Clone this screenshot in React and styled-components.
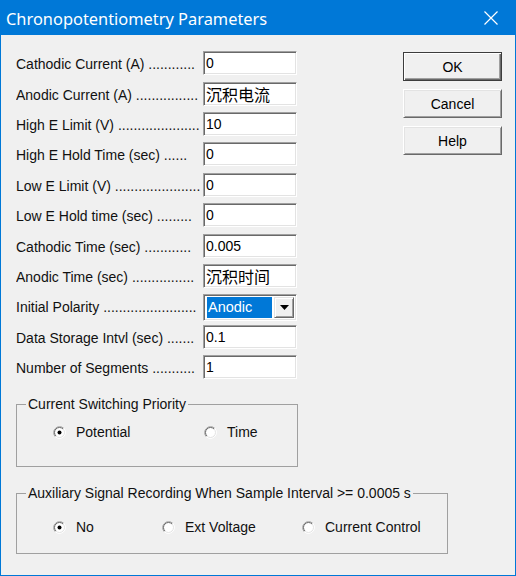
import React from 'react';
import styled, { createGlobalStyle } from 'styled-components';

const Global = createGlobalStyle`
  html, body { margin: 0; padding: 0; background: #f0f0f0; }
  body { font-family: "Liberation Sans", Arial, "Noto Sans CJK SC", sans-serif; }
`;

const Window = styled.div`
  width: 516px;
  height: 576px;
  display: flex;
  flex-direction: column;
  background: #f0f0f0;
  overflow: hidden;
`;

const TitleBar = styled.div`
  height: 35px;
  flex-shrink: 0;
  background: #0078d7;
  display: flex;
  align-items: center;
  justify-content: space-between;
  padding: 0 18px 0 6px;
  box-sizing: border-box;
`;

const Title = styled.div`
  font-family: "Noto Sans", "Open Sans", sans-serif;
  font-size: 16.4px;
  color: #fff;
  padding-top: 1px;
`;

const Body = styled.div`
  flex: 1;
  display: grid;
  grid-template-columns: 1fr 99px;
  grid-template-areas:
    "form buttons"
    "aux aux";
  align-items: start;
  align-content: start;
  box-sizing: border-box;
  border: 1px solid #0078d7;
  border-top: none;
  padding: 13px 13px 0 15px;
`;

const FormArea = styled.div`
  grid-area: form;
  display: flex;
  flex-direction: column;
`;

const AuxArea = styled.div`
  grid-area: aux;
`;

const FormGrid = styled.div`
  display: grid;
  grid-template-columns: 187px 94px;
  grid-auto-rows: 30.4px;
  align-items: center;
`;

const Label = styled.div`
  font-size: 14px;
  line-height: 16px;
  color: #111;
  white-space: nowrap;
  overflow: hidden;
  padding-top: 2px;
`;

const TextBox = styled.input`
  box-sizing: border-box;
  width: 94px;
  height: 24px;
  margin: 0;
  padding: 0 0 0 2px;
  background: #fff;
  border: 1px solid;
  border-color: #a0a0a0 #fff #fff #a0a0a0;
  box-shadow: inset 1px 1px #696969, inset -1px -1px #e3e3e3;
  font-family: ${p => (p.$cjk ? '"Noto Sans CJK SC", sans-serif' : '"Liberation Sans", Arial, sans-serif')};
  font-size: ${p => (p.$cjk ? '16px' : '14px')};
  color: #000;
  outline: none;
`;

const Combo = styled.div`
  box-sizing: border-box;
  width: 94px;
  height: 27px;
  margin-top: 3px;
  display: flex;
  padding: 2px 2px 2px 3px;
  gap: 2px;
  background: #fff;
  border: 1px solid;
  border-color: #a0a0a0 #fff #fff #a0a0a0;
  box-shadow: inset 1px 1px #696969, inset -1px -1px #e3e3e3;
`;

const ComboValue = styled.div`
  flex: 1;
  background: #0078d7;
  color: #fff;
  font-size: 14.5px;
  line-height: 21px;
  padding-left: 1px;
`;

const DropButton = styled.div`
  width: 20px;
  box-sizing: border-box;
  background: #f0f0f0;
  border: 1px solid;
  border-color: #e3e3e3 #696969 #696969 #e3e3e3;
  box-shadow: inset 1px 1px #fff, inset -1px -1px #a0a0a0;
  display: flex;
  align-items: center;
  justify-content: center;
`;

const Group = styled.fieldset`
  box-sizing: border-box;
  width: ${p => p.$w}px;
  margin: ${p => p.$mt}px 0 0 0;
  padding: ${p => p.$pt}px 0 ${p => p.$pb}px 9px;
  border: 1px solid #a0a0a0;
  min-width: 0;
`;

const Caption = styled.legend`
  padding: 0 2px;
  font-size: 14px;
  line-height: 16px;
  color: #111;
`;

const OptionRow = styled.div`
  display: flex;
  padding-left: 27px;
`;

const Option = styled.label`
  display: flex;
  align-items: center;
  width: ${p => (p.$w ? `${p.$w}px` : 'auto')};
  font-size: 14px;
  line-height: 16px;
  color: #111;
`;

const RadioMark = styled.svg`
  width: 13px;
  height: 13px;
  margin-right: 10px;
  flex-shrink: 0;
`;

const ButtonCol = styled.div`
  grid-area: buttons;
  margin-top: 4px;
  display: flex;
  flex-direction: column;
  gap: 8px;
`;

const Button = styled.button`
  box-sizing: border-box;
  width: 99px;
  height: 29px;
  margin: 0;
  padding: 0;
  background: #f0f0f0;
  font-family: "Liberation Sans", Arial, sans-serif;
  font-size: 14px;
  color: #000;
  border: 1px solid;
  border-color: ${p => (p.$default ? '#3c3c3c' : '#fff #696969 #696969 #fff')};
  box-shadow: ${p =>
    p.$default
      ? 'inset 1px 1px #fff, inset -1px -1px #696969, inset -2px -2px #a0a0a0'
      : 'inset 1px 1px #e3e3e3, inset -1px -1px #a0a0a0'};
`;

function Radio({ checked }) {
  return (
    <RadioMark viewBox="0 0 13 13">
      <circle cx="6.5" cy="6.5" r="6" fill="#fff" />
      <path d="M2.26 10.74 A6 6 0 0 1 10.74 2.26" stroke="#a0a0a0" strokeWidth="1" fill="none" />
      <path d="M2.96 10.04 A5 5 0 0 1 10.04 2.96" stroke="#696969" strokeWidth="1" fill="none" />
      <path d="M10.74 2.26 A6 6 0 0 1 2.26 10.74" stroke="#ffffff" strokeWidth="1" fill="none" />
      <path d="M10.04 2.96 A5 5 0 0 1 2.96 10.04" stroke="#e3e3e3" strokeWidth="1" fill="none" />
      {checked && <circle cx="6.5" cy="6.5" r="2" fill="#000" />}
    </RadioMark>
  );
}

const rows = [
  ['Cathodic Current (A) ............', '0'],
  ['Anodic Current (A) ................', '沉积电流', true],
  ['High E Limit (V) .....................', '10'],
  ['High E Hold Time (sec) ......', '0'],
  ['Low E Limit (V) ......................', '0'],
  ['Low E Hold time (sec) .........', '0'],
  ['Cathodic Time (sec) ............', '0.005'],
  ['Anodic Time (sec) ................', '沉积时间', true],
  ['Initial Polarity ........................', null],
  ['Data Storage Intvl (sec) .......', '0.1'],
  ['Number of Segments ...........', '1'],
];

export default function App() {
  return (
    <>
      <Global />
      <Window>
        <TitleBar>
          <Title>Chronopotentiometry Parameters</Title>
          <svg width="14" height="14" viewBox="0 0 14 14">
            <path d="M0.5 0.5 L13.5 13.5 M13.5 0.5 L0.5 13.5" stroke="#fff" strokeWidth="1.2" />
          </svg>
        </TitleBar>
        <Body>
          <FormArea>
            <FormGrid>
              {rows.map(([label, value, cjk]) => (
                <React.Fragment key={label}>
                  <Label>{label}</Label>
                  {value === null ? (
                    <Combo>
                      <ComboValue>Anodic</ComboValue>
                      <DropButton>
                        <svg width="9" height="5" viewBox="0 0 9 5">
                          <path d="M0 0 H9 L4.5 5 Z" fill="#000" />
                        </svg>
                      </DropButton>
                    </Combo>
                  ) : (
                    <TextBox defaultValue={value} $cjk={cjk} readOnly />
                  )}
                </React.Fragment>
              ))}
            </FormGrid>
            <Group $w={282} $mt={14} $pt={12} $pb={26}>
              <Caption>Current Switching Priority</Caption>
              <OptionRow>
                <Option $w={151}><Radio checked />Potential</Option>
                <Option><Radio />Time</Option>
              </OptionRow>
            </Group>
          </FormArea>
          <ButtonCol>
            <Button $default>OK</Button>
            <Button>Cancel</Button>
            <Button>Help</Button>
          </ButtonCol>
          <AuxArea>
            <Group $w={432} $mt={18} $pt={18} $pb={18}>
              <Caption>Auxiliary Signal Recording When Sample Interval &gt;= 0.0005 s</Caption>
              <OptionRow>
                <Option $w={109}><Radio checked />No</Option>
                <Option $w={140}><Radio />Ext Voltage</Option>
                <Option><Radio />Current Control</Option>
              </OptionRow>
            </Group>
          </AuxArea>
        </Body>
      </Window>
    </>
  );
}
